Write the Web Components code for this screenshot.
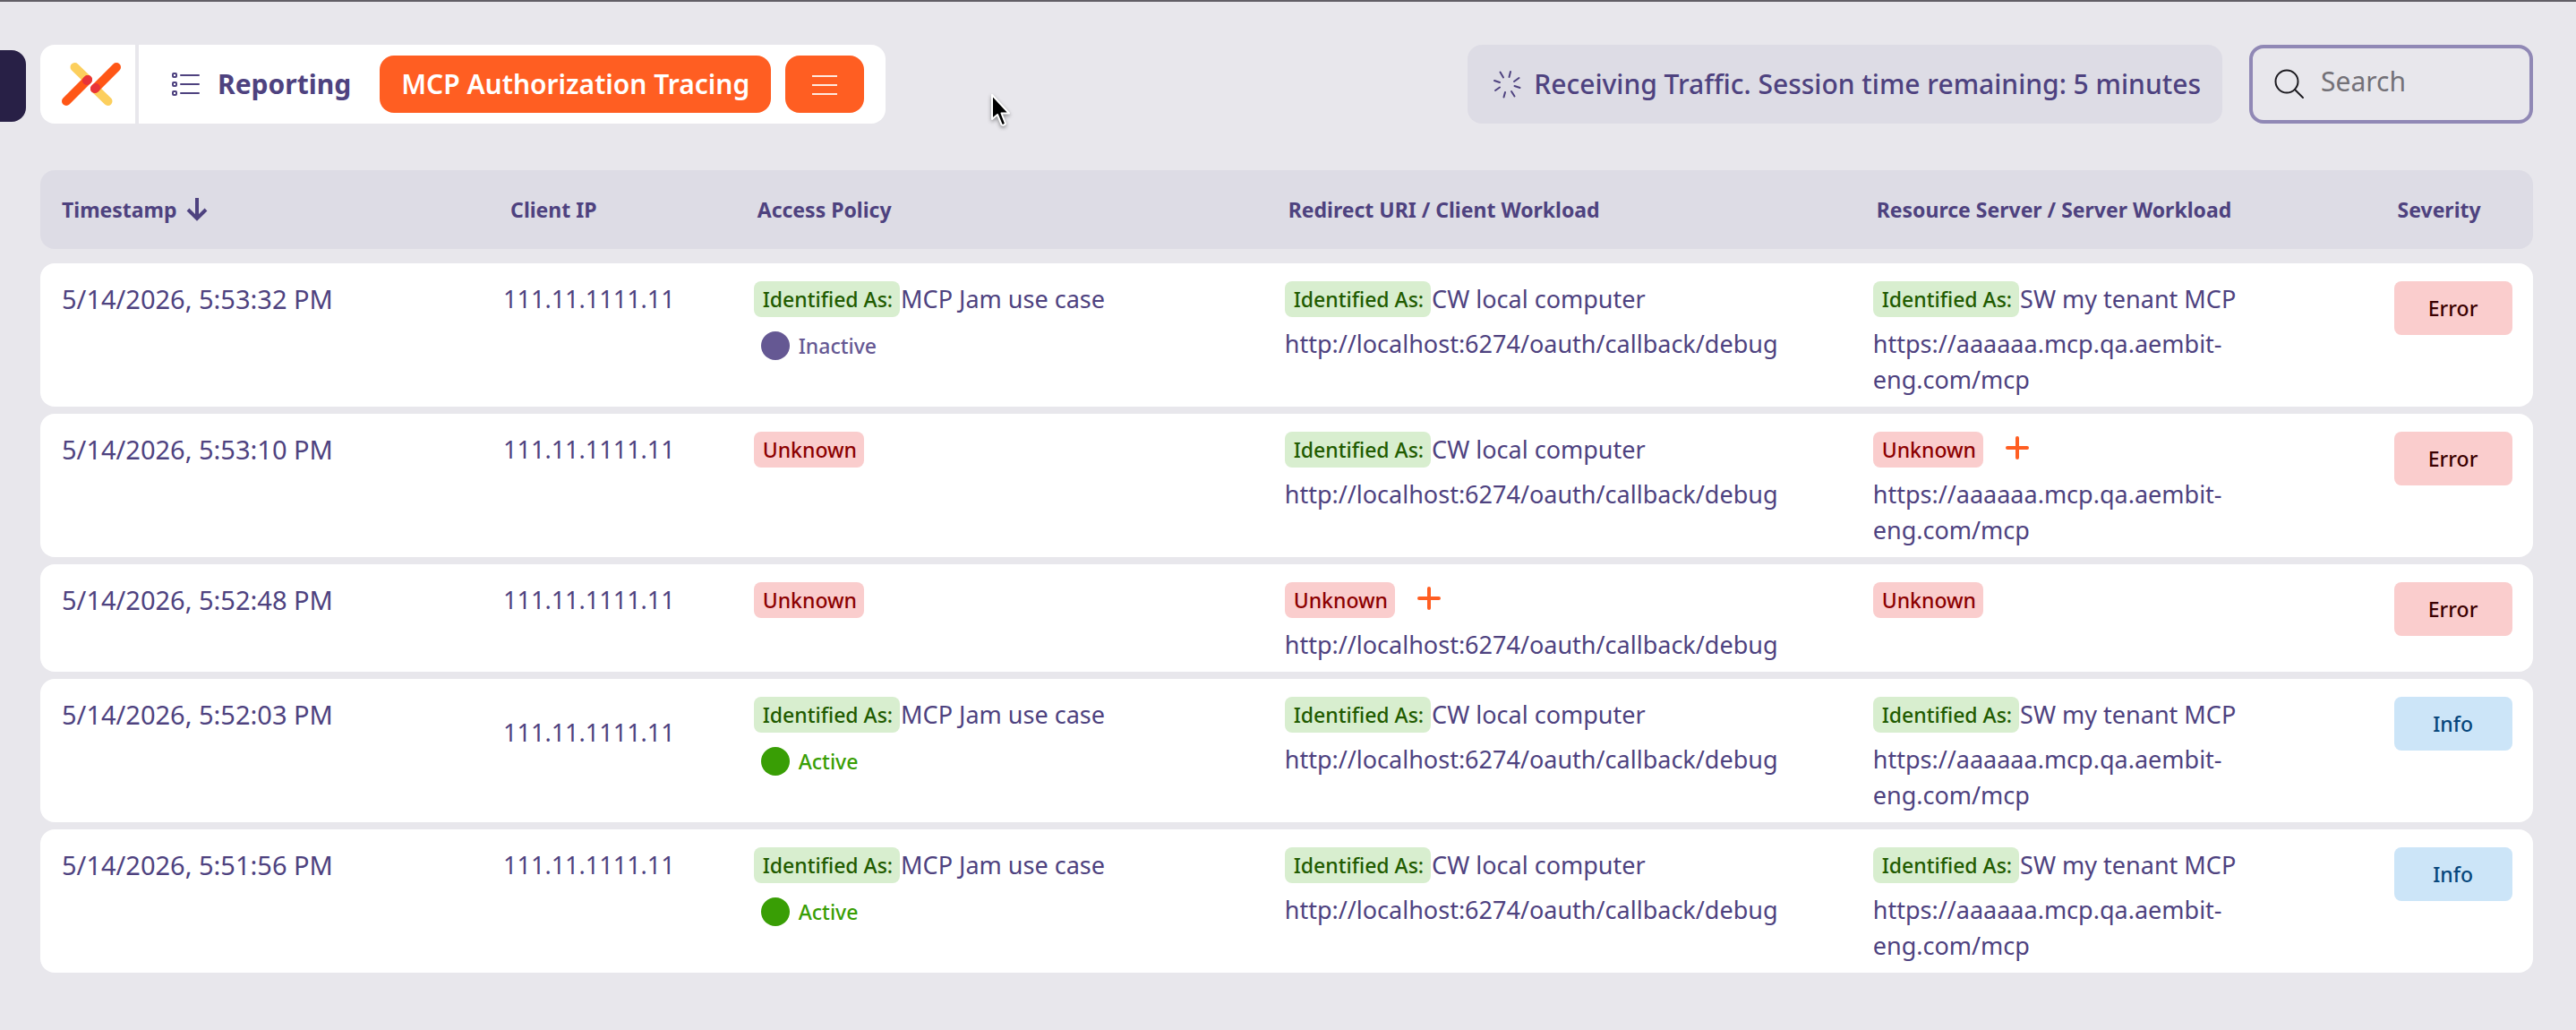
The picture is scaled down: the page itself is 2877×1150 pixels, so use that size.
<!DOCTYPE html>
<html lang="en">
<head>
<meta charset="utf-8">
<title>MCP Authorization Tracing</title>
<style>
	html {
		background-color: #e8e7ec;
	}
	body {
		--ink: #4e427f;
		--panel: #dddce5;
		--accent: #ff5e22;
		margin: 0;
		border-top: 2px solid #625f66;
		color: var(--ink);
		font-family: "Noto Sans", Roboto, sans-serif;
		font-size: 27px;
		line-height: 40px;
	}
	main {
		padding: 0 48px 64px 45px;
	}
</style>
</head>
<body>

<template id="AppToolbarTemplate">
	<style>
		:host {
			display: flex;
			align-items: center;
			padding: 48px 48px 44px 0;
			font-size: 30px;
		}
		.drawer {
			width: 29px;
			height: 80px;
			margin: 4px 16px 0 0;
			padding: 0;
			border: 0;
			border-radius: 0 16px 16px 0;
			background-color: #282046;
		}
		.crumbs {
			display: flex;
			height: 88px;
			border-radius: 16px;
			background-color: white;
		}
		.logo {
			display: flex;
			align-items: center;
			width: 82px;
			padding-left: 24px;
			border-right: 4px solid #e8e7ec;
		}
		.trail {
			display: flex;
			align-items: center;
			gap: 16px;
			padding: 0 24px 0 36px;
		}
		.section {
			display: flex;
			align-items: center;
			gap: 20px;
			margin-right: 16px;
			color: inherit;
			font-weight: 700;
			text-decoration: none;
		}
		button {
			font: inherit;
		}
		.page, .menu {
			height: 64px;
			padding: 0 24px;
			border: 0;
			border-radius: 16px;
			background-color: var(--accent);
			color: white;
			font-weight: 600;
		}
		.menu {
			display: flex;
			align-items: center;
			padding: 0 30px;
		}
		.right {
			display: flex;
			gap: 30px;
			margin-left: auto;
		}
	</style>
	<button class="drawer" aria-label="Open navigation"></button>
	<div class="crumbs">
		<div class="logo">
			<svg width="66" height="48" viewBox="0 0 66 48" fill="none" stroke-width="10" stroke-linecap="round">
				<path d="M14.5 5 29 19M37 29 51.500 43" stroke="#fccf5d"/>
				<path d="M5 43 29 19M61 5 37 29" stroke="#ff5616"/>
				<path d="M28 20 29 19M37 29 38 28" stroke="#e83338"/>
			</svg>
		</div>
		<div class="trail">
			<a class="section" href="#reporting">
				<svg width="32" height="28" viewBox="0 0 32 28" fill="none" stroke="#4e427f" stroke-width="2">
					<rect x="2" y="2" width="4" height="4" rx="1"/>
					<rect x="2" y="12" width="4" height="4" rx="1"/>
					<rect x="2" y="22" width="4" height="4" rx="1"/>
					<path d="M11 4h20M11 14h20M11 24h20" stroke-linecap="round"/>
				</svg>
				<span>Reporting</span>
			</a>
			<button class="page">MCP Authorization Tracing</button>
			<button class="menu" aria-label="Menu">
				<svg width="28" height="24" viewBox="0 0 28 24" fill="none" stroke="#ffe9df" stroke-width="2">
					<path d="M0 3h28M0 13h28M0 23h28"/>
				</svg>
			</button>
		</div>
	</div>
	<div class="right">
		<slot></slot>
	</div>
</template>

<template id="SessionBannerTemplate">
	<style>
		:host {
			display: flex;
			align-items: center;
			gap: 14px;
			height: 88px;
			padding: 0 24px 0 28px;
			box-sizing: border-box;
			border-radius: 16px;
			background-color: var(--panel);
			font-size: 30px;
			font-weight: 500;
		}
	</style>
	<svg width="32" height="32" viewBox="0 0 32 32" fill="none" stroke="#4e427f" stroke-width="2" stroke-linecap="round">
		<path d="M20 2 18.500 8M29.500 9 24 13M30.500 20 24.500 18M24.500 29.500 21 24M12.500 30.500 14 25M3 23 8 19.500M2 12 8 14M8.500 2.500 12 8.500"/>
	</svg>
	<span><slot></slot></span>
</template>

<template id="SearchBoxTemplate">
	<style>
		:host {
			display: block;
		}
		label {
			display: flex;
			align-items: center;
			gap: 18px;
			box-sizing: border-box;
			width: 317px;
			height: 88px;
			padding: 0 24px;
			border: 4px solid #9088b5;
			border-radius: 16px;
		}
		svg {
			flex: none;
		}
		input {
			flex: 1;
			min-width: 0;
			padding: 0 0 6px;
			border: 0;
			outline: 0;
			background: none;
			color: inherit;
			font: inherit;
		}
		input::placeholder {
			color: #737177;
			opacity: 1;
		}
	</style>
	<label>
		<svg width="34" height="34" viewBox="0 0 34 34" fill="none" stroke="#1c1b20" stroke-width="2" stroke-linecap="round" role="img" aria-label="Search">
			<circle cx="14" cy="14" r="12.5"/>
			<path d="M23 23 32 32"/>
		</svg>
		<input type="search" placeholder="Search">
	</label>
</template>

<template id="TraceTagTemplate">
	<style>
		:host {
			display: inline-block;
			padding: 0 8px 0 10px;
			border-radius: 8px;
			background-color: #d8eecf;
			color: #215b00;
			font-size: 23px;
			font-weight: 500;
			white-space: nowrap;
		}
		:host([kind="unknown"]) {
			background-color: #facdcd;
			color: #8c0000;
		}
	</style>
	<slot></slot>
</template>

<template id="PolicyStatusTemplate">
	<style>
		:host {
			display: flex;
			align-items: center;
			gap: 10px;
			height: 32px;
			margin: 16px 0 0 8px;
			color: #655893;
			font-size: 23px;
			font-weight: 500;
		}
		:host([active]) {
			color: #399e05;
		}
		.dot {
			width: 32px;
			height: 32px;
			border-radius: 50%;
			background-color: currentColor;
		}
	</style>
	<span class="dot"></span>
	<slot></slot>
</template>

<template id="SeverityBadgeTemplate">
	<style>
		:host {
			display: block;
			width: 132px;
			border-radius: 8px;
			background-color: #facdcd;
			color: #3a0000;
			font-size: 23px;
			font-weight: 500;
			line-height: 60px;
			text-align: center;
		}
		:host([level="Info"]) {
			background-color: #cce5f8;
			color: #07477c;
		}
	</style>
	<slot></slot>
</template>

<template id="TraceTableTemplate">
	<style>
		:host {
			display: block;
		}
		table {
			width: 100%;
			table-layout: fixed;
			border-collapse: separate;
			border-spacing: 0 8px;
		}
		.time { width: 18%; }
		.ip { width: 9.9%; }
		.policy { width: 21.3%; }
		.client { width: 23.6%; }
		.server { width: 20.9%; }
		th {
			height: 88px;
			padding: 0 0 0 24px;
			background-color: var(--panel);
			font-size: 23px;
			font-weight: 700;
			text-align: left;
			white-space: nowrap;
		}
		th button {
			display: flex;
			align-items: center;
			gap: 10px;
			padding: 0;
			border: 0;
			background: none;
			color: inherit;
			font: inherit;
		}
		/* empty row: doubles the spacing under the header */
		tbody::before {
			content: "";
			display: table-row;
		}
		td {
			padding: 20px 40px 10px 20px;
			background-color: white;
			vertical-align: top;
		}
		td:first-child {
			padding-left: 24px;
			font-size: 29px;
		}
		td:nth-child(2) {
			padding-left: 16px;
			padding-right: 0;
		}
		td.low {
			padding-top: 40px;
		}
		td:last-child {
			padding-right: 0;
		}
		th:first-child, td:first-child {
			border-radius: 16px 0 0 16px;
		}
		th:last-child, td:last-child {
			border-radius: 0 16px 16px 0;
		}
		.line {
			display: flex;
			gap: 1px;
			white-space: nowrap;
		}
		.url {
			margin-top: 10px;
		}
		.add {
			display: flex;
			align-items: center;
			margin-left: 24px;
			padding: 0 0 4px;
			border: 0;
			background: none;
		}
	</style>
	<table>
		<colgroup>
			<col class="time"><col class="ip"><col class="policy"><col class="client"><col class="server"><col>
		</colgroup>
		<thead>
			<tr>
				<th aria-sort="descending">
					<button>Timestamp
						<svg width="24" height="26" viewBox="0 0 24 26" fill="none" stroke="#4e427f" stroke-width="4">
							<path d="M12 0v23M2 13 12 23 22 13"/>
						</svg>
					</button>
				</th>
				<th>Client IP</th>
				<th>Access Policy</th>
				<th>Redirect URI / Client Workload</th>
				<th>Resource Server / Server Workload</th>
				<th>Severity</th>
			</tr>
		</thead>
		<tbody></tbody>
	</table>
</template>

<app-toolbar>
	<session-banner>Receiving Traffic. Session time remaining: 5 minutes</session-banner>
	<search-box></search-box>
</app-toolbar>
<main>
	<trace-table></trace-table>
</main>
<mouse-pointer></mouse-pointer>

<template id="MousePointerTemplate">
	<style>
		:host {
			position: absolute;
			left: 1106px;
			top: 104px;
			line-height: 0;
			pointer-events: none;
			filter: drop-shadow(0 2px 2px rgba(0, 0, 0, .4));
		}
	</style>
	<svg width="26" height="40" viewBox="0 0 26 40">
		<path d="M2 2V29L8 24 12.500 35Q14.500 37 17 34L12.500 22.500H21Z" fill="black" stroke="white" stroke-width="2" stroke-linejoin="round"/>
	</svg>
</template>

<script>
	const CALLBACK = 'http://localhost:6274/oauth/callback/debug';
	const SERVER = 'https://aaaaaa.mcp.qa.aembit-eng.com/mcp';
	const CW = 'CW local computer';
	const SW = 'SW my tenant MCP';
	const JAM = 'MCP Jam use case';

	const TRACES = [
		{ time: '5/14/2026, 5:53:32 PM', policy: JAM, status: 'Inactive', client: CW, server: SW, url: SERVER, severity: 'Error' },
		{ time: '5/14/2026, 5:53:10 PM', client: CW, canAddServer: true, url: SERVER, severity: 'Error' },
		{ time: '5/14/2026, 5:52:48 PM', canAddClient: true, severity: 'Error' },
		{ time: '5/14/2026, 5:52:03 PM', low: true, policy: JAM, status: 'Active', client: CW, server: SW, url: SERVER, severity: 'Info' },
		{ time: '5/14/2026, 5:51:56 PM', policy: JAM, status: 'Active', client: CW, server: SW, url: SERVER, severity: 'Info' }
	];

	// Clones <template id="..."> into an open shadow root
	class TemplateElement extends HTMLElement {
		constructor() {
			super();
			const template = document.getElementById(this.constructor.templateId);
			this.attachShadow({mode: 'open'});
			this.shadowRoot.appendChild(template.content.cloneNode(true));
		}
	}

	class AppToolbar extends TemplateElement {
		static get templateId() { return 'AppToolbarTemplate'; }
	}

	class SessionBanner extends TemplateElement {
		static get templateId() { return 'SessionBannerTemplate'; }
	}

	class SearchBox extends TemplateElement {
		static get templateId() { return 'SearchBoxTemplate'; }
	}

	class TraceTag extends TemplateElement {
		static get templateId() { return 'TraceTagTemplate'; }
	}

	class PolicyStatus extends TemplateElement {
		static get templateId() { return 'PolicyStatusTemplate'; }
	}

	class SeverityBadge extends TemplateElement {
		static get templateId() { return 'SeverityBadgeTemplate'; }
	}

	class MousePointer extends TemplateElement {
		static get templateId() { return 'MousePointerTemplate'; }
	}

	class TraceTable extends TemplateElement {
		static get templateId() { return 'TraceTableTemplate'; }

		connectedCallback() {
			const body = this.shadowRoot.querySelector('tbody');
			body.innerHTML = TRACES.map(trace => this.row(trace)).join('');
		}

		row(trace) {
			const status = trace.status
				? `<policy-status ${trace.status === 'Active' ? 'active' : ''}>${trace.status}</policy-status>`
				: '';
			return `<tr>
				<td>${trace.time}</td>
				<td class="${trace.low ? 'low' : ''}">111.11.1111.11</td>
				<td>${this.identity(trace.policy)}${status}</td>
				<td>${this.identity(trace.client, trace.canAddClient)}${this.url(CALLBACK)}</td>
				<td>${this.identity(trace.server, trace.canAddServer)}${this.url(trace.url)}</td>
				<td><severity-badge level="${trace.severity}">${trace.severity}</severity-badge></td>
			</tr>`;
		}

		identity(name, canAdd) {
			if (name) {
				return `<div class="line"><trace-tag>Identified As:</trace-tag><span>${name}</span></div>`;
			}
			const add = canAdd
				? `<button class="add" aria-label="Add workload">
						<svg width="26" height="26" viewBox="0 0 26 26" fill="none" stroke="#ff5e22" stroke-width="4" stroke-linecap="round">
							<path d="M13 2v22M2 13h22"/>
						</svg>
					</button>`
				: '';
			return `<div class="line"><trace-tag kind="unknown">Unknown</trace-tag>${add}</div>`;
		}

		url(value) {
			return value ? `<div class="url">${value}</div>` : '';
		}
	}

	window.customElements.define('app-toolbar', AppToolbar);
	window.customElements.define('session-banner', SessionBanner);
	window.customElements.define('search-box', SearchBox);
	window.customElements.define('trace-tag', TraceTag);
	window.customElements.define('policy-status', PolicyStatus);
	window.customElements.define('severity-badge', SeverityBadge);
	window.customElements.define('trace-table', TraceTable);
	window.customElements.define('mouse-pointer', MousePointer);
</script>
</body>
</html>
